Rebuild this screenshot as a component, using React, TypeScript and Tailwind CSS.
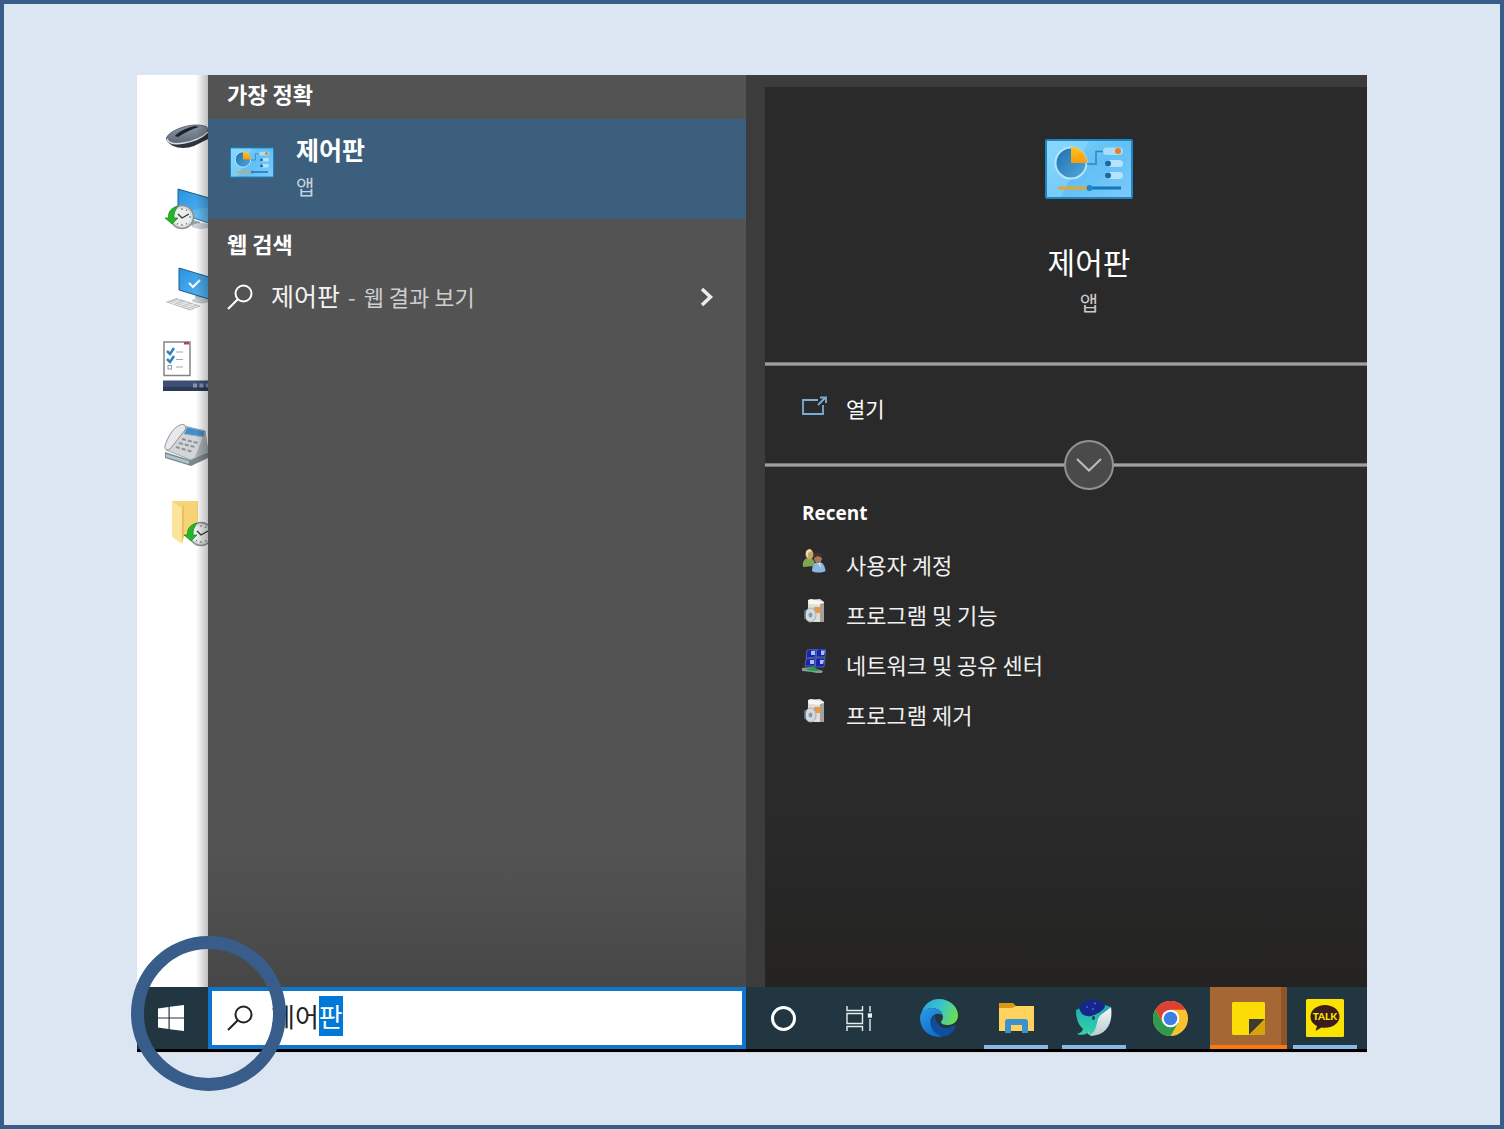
import { useEffect, useRef } from "react";
import type { ReactNode } from "react";

function ControlPanelIcon({ className }: { className: string }) {
  return (
    <svg viewBox="0 0 88 60" className={className} aria-hidden="true">
      <defs>
        <linearGradient id="cp-bg" x1="0" y1="0" x2="1" y2="1">
          <stop offset="0" stopColor="#7fd3fb" />
          <stop offset="0.5" stopColor="#62bff5" />
          <stop offset="1" stopColor="#7ccbfa" />
        </linearGradient>
        <linearGradient id="cp-pie" x1="0" y1="0" x2="1" y2="1">
          <stop offset="0" stopColor="#1c6fae" />
          <stop offset="1" stopColor="#55a9dc" />
        </linearGradient>
        <linearGradient id="cp-slice" x1="0" y1="0" x2="0" y2="1">
          <stop offset="0" stopColor="#ffc31f" />
          <stop offset="1" stopColor="#f79a10" />
        </linearGradient>
      </defs>
      <rect x="1" y="1" width="86" height="58" rx="1" fill="url(#cp-bg)" stroke="#1f83c4" strokeWidth="2" />
      <path d="M2 2H44L16 58H2Z" fill="#9be0ff" opacity="0.4" />
      <circle cx="26" cy="24" r="15.5" fill="url(#cp-pie)" stroke="#b4e6ff" strokeWidth="2" />
      <path d="M26 24V8A16 16 0 0 1 42 24Z" fill="url(#cp-slice)" />
      <path d="M42 25H51V12.500H59" fill="none" stroke="#2a86c0" strokeWidth="1.500" />
      <rect x="58" y="8.500" width="20" height="7.500" rx="3.700" fill="#a9def9" />
      <circle cx="73" cy="12" r="3" fill="#ef7d1a" />
      <rect x="60" y="21" width="18" height="7" rx="3.500" fill="#b4e3fb" />
      <circle cx="63" cy="24.500" r="3" fill="#176ba6" />
      <rect x="60" y="33" width="18" height="7" rx="3.500" fill="#b4e3fb" />
      <circle cx="63" cy="36.500" r="3" fill="#176ba6" />
      <path d="M13 49H42" stroke="#e9a42c" strokeWidth="3" />
      <path d="M46 49H76" stroke="#1476bd" strokeWidth="3" />
      <circle cx="44.500" cy="49" r="3" fill="#1b86d2" />
    </svg>
  );
}

function SearchGlyph({ className }: { className: string }) {
  return (
    <svg viewBox="0 0 26 26" className={className} fill="none" stroke="currentColor" strokeWidth="2" aria-hidden="true">
      <circle cx="16.500" cy="9.500" r="8" />
      <path d="M10.800 15.200L1 25" />
    </svg>
  );
}

function Clock({ x, y }: { x: number; y: number }) {
  return (
    <g transform={`translate(${x} ${y})`}>
      <circle r="11.500" fill="#d9dcdd" stroke="#8b9093" strokeWidth="1.500" />
      <circle r="9" fill="#eceeee" />
      <path d="M0-9V-7M0 7V9M7 0H9M5-7.500L4-6M5 7.500L4 6M-5 7.500L-4 6" stroke="#666" strokeWidth="1" />
      <path d="M-4-3L0 1L7-3" fill="none" stroke="#333" strokeWidth="1.300" />
      <path d="M-4-11C-12-9-14-4-13.500 1H-17L-10 7L-4 1H-8C-8.500-3-7-7-4-11Z" fill="#25b52b" stroke="#13861c" strokeWidth="0.700" />
    </g>
  );
}

function DesktopIcon({ children }: { children: ReactNode }) {
  return (
    <svg width="46" height="78" viewBox="0 0 46 78" className="shrink-0" aria-hidden="true">
      {children}
    </svg>
  );
}

function DesktopStrip() {
  return (
    <div className="relative flex w-[71px] shrink-0 flex-col overflow-hidden bg-white pl-[25px] pt-[21px]">
      <DesktopIcon>
        <defs>
          <linearGradient id="mouse" x1="0" y1="0" x2="0" y2="1">
            <stop offset="0" stopColor="#8c98a6" />
            <stop offset="1" stopColor="#5d6876" />
          </linearGradient>
          <linearGradient id="screen" x1="0" y1="0" x2="1" y2="1">
            <stop offset="0" stopColor="#2a93e0" />
            <stop offset="1" stopColor="#5bb9f5" />
          </linearGradient>
        </defs>
        <path d="M5 44C8 52 22 54 32 50L46 43V34L10 40Z" fill="#30353b" />
        <path d="M4.500 42C6 36 22 29 34 29C42 29 46 31 46 33C46 39 32 45 20 47.500C11 49 4 47 4.500 42Z" fill="url(#mouse)" stroke="#4a525c" strokeWidth="0.800" />
        <path d="M5 43C7 48 14 48.500 22 47C33 45 42 40 46 36" fill="none" stroke="#d9dee3" strokeWidth="1.500" />
        <path d="M13 40C16 36 24 32 33 30L37 31C30 33 22 37 16 41Z" fill="#1c2228" />
      </DesktopIcon>
      <DesktopIcon>
        <path d="M28 45L38 48V51L30 53Z" fill="#9ba3aa" />
        <ellipse cx="39" cy="52" rx="9" ry="3" fill="#cfd4d8" />
        <path d="M16 15L47 24V49L16 39Z" fill="url(#screen)" stroke="#1a5c94" strokeWidth="1" />
        <path d="M16 39L47 49L47 33Z" fill="#8ad0fb" opacity="0.35" />
        <Clock x={20} y={43} />
      </DesktopIcon>
      <DesktopIcon>
        <path d="M33 43L41 45V48H34Z" fill="#aab0b5" />
        <ellipse cx="39" cy="48.500" rx="9" ry="3" fill="#c6ccd0" />
        <path d="M17 16L47 25V47L17 38Z" fill="url(#screen)" stroke="#1a5c94" strokeWidth="1" />
        <path d="M27 31L31 35L38 28" fill="none" stroke="#fff" strokeWidth="2" />
        <path d="M3.500 50L15 46L39 54L28 58.500Z" fill="#b9bec3" />
        <path d="M7 50L30 57M10 49L33 56M13 48L36 55M10 52L18 47M17 54L25 50M24 56L32 52" stroke="#f0f2f3" strokeWidth="0.800" />
      </DesktopIcon>
      <DesktopIcon>
        <rect x="2" y="12" width="26" height="33.500" fill="#fff" stroke="#858585" strokeWidth="1.500" />
        <rect x="22" y="12" width="5" height="2.500" fill="#b9414c" />
        <path d="M5 21L8 24L12 18M5 29L8 32L12 26" fill="none" stroke="#2b83c6" strokeWidth="2.500" />
        <rect x="6" y="35.500" width="3.500" height="3.500" fill="none" stroke="#999" />
        <path d="M14 22H21M14 29.500H21M14 37H21" stroke="#aaa" strokeWidth="1" />
        <rect x="1" y="50.500" width="46" height="10.500" fill="#3d4f72" />
        <rect x="1" y="57" width="46" height="4" fill="#2c3a59" />
        <path d="M31 55.500H35M37.500 55.500H41.500M44 55.500H47" stroke="#8492ae" strokeWidth="4" />
      </DesktopIcon>
      <DesktopIcon>
        <path d="M3 44L28 52L46 44V50L29 58L3 50Z" fill="#7c878c" />
        <path d="M4 46L27 53V56L4 49Z" fill="#a9c7cc" />
        <path d="M4 42L22 18L43 23L46 43L29 52Z" fill="#d2d5d8" stroke="#8f959a" strokeWidth="0.800" />
        <path d="M25 19L43 23L42 29L22 26Z" fill="#3d8fd0" stroke="#a8adb0" strokeWidth="1" />
        <path d="M20 31L36 35M17 35L33 39M14 39L31 44" stroke="#8b9297" strokeWidth="2" strokeDasharray="4 2" />
        <path d="M3 38C2 42 6 43 9 40L23 22C25 18 22 15 18 17C11 20 6 28 3 38Z" fill="#e7e9ea" stroke="#84898e" strokeWidth="0.900" />
        <path d="M33 49L42 26L46 43Z" fill="#8e969b" opacity="0.6" />
      </DesktopIcon>
      <DesktopIcon>
        <rect x="10" y="15" width="26" height="35" fill="#f5d477" />
        <path d="M10 15L20 22V58L10 51Z" fill="#fbe39a" />
        <path d="M20 22V58L22 50V18Z" fill="#e8c15c" />
        <Clock x={39} y={48} />
      </DesktopIcon>
      <div className="absolute inset-y-0 right-0 w-3 bg-linear-to-r from-transparent to-black/25" />
    </div>
  );
}

function UsersIcon() {
  return (
    <svg viewBox="0 0 24 24" className="size-6" aria-hidden="true">
      <path d="M1 18C0 12 3 9 7 9S13 12 13 17Z" fill="#7fa653" />
      <ellipse cx="7.500" cy="5.500" rx="4" ry="5" fill="#c9a368" />
      <path d="M4 5C3 0 9-1 10 2L6 4L6 9Z" fill="#efdca8" />
      <path d="M10 22C10 16 13 13 17 13S23 17 23.500 22C20 24 13 24 10 22Z" fill="#8cb6de" />
      <ellipse cx="16" cy="9" rx="4" ry="5" fill="#a8765a" />
      <path d="M11.500 9C11 3 17 2 20 6V9L16 7Z" fill="#3f342d" />
      <path d="M16 14L18 14L19 19Z" fill="#e8f0f8" />
    </svg>
  );
}

function ProgramsIcon() {
  return (
    <svg viewBox="0 0 24 24" className="size-6" aria-hidden="true">
      <path d="M6 1L18 0L22 3V23H8L6 20Z" fill="#deddd9" />
      <path d="M6 1L9 0L22 3V6L7 5Z" fill="#f7f7f5" />
      <path d="M18 5L22 4V23H18Z" fill="#a5a29c" />
      <rect x="12" y="8" width="6" height="6" fill="#e69a48" />
      <ellipse cx="8.500" cy="16" rx="5.500" ry="7" fill="#d4dbe0" stroke="#9eacb4" />
      <ellipse cx="8.500" cy="16" rx="2" ry="2.500" fill="#8598a5" />
      <path d="M3 11V20" stroke="#5f7482" strokeWidth="1.500" />
    </svg>
  );
}

function NetworkIcon() {
  return (
    <svg viewBox="0 0 24 24" className="size-6" aria-hidden="true">
      <path d="M5 1L14 0V8L4 9ZM15 0H24L23 8H14ZM4 10L13 9V17L3 17ZM14 9H23L22 18H13Z" fill="#1a22b4" stroke="#7088c0" strokeWidth="0.600" />
      <path d="M9 2L13 1.500V6L9 6ZM19 1.500L23 1.500L22 6H19ZM8 11L12 11V15L8 15ZM18 11L22 11L21 15H18Z" fill="#a9bff8" />
      <path d="M0 19L8 18L21 22L19 25L10 23L0 22Z" fill="#8c969b" />
      <path d="M4 20L11 17L17 22L9 22Z" fill="#23a24b" />
    </svg>
  );
}

const recent = [
  { label: "사용자 계정", icon: <UsersIcon /> },
  { label: "프로그램 및 기능", icon: <ProgramsIcon /> },
  { label: "네트워크 및 공유 센터", icon: <NetworkIcon /> },
  { label: "프로그램 제거", icon: <ProgramsIcon /> },
];

function ResultsPanel() {
  return (
    <section className="flex w-[538px] shrink flex-col bg-linear-to-b from-[#525352] from-85% to-[#474747] text-white">
      <h2 className="h-11 pl-[19px] text-[22px] leading-9 font-bold">가장 정확</h2>
      <button type="button" className="flex h-[100px] items-start bg-[#3b5f7c] pl-[22px] text-left">
        <ControlPanelIcon className="mt-7 h-[31px] w-11" />
        <span className="ml-[22px] flex flex-col">
          <span className="mt-3 text-[25px] leading-9 font-bold">제어판</span>
          <span className="mt-1 text-[20px] leading-8 text-[#c5d3df]">앱</span>
        </span>
      </button>
      <h2 className="mt-1.5 pl-[19px] text-[22px] leading-9 font-bold">웹 검색</h2>
      <button type="button" className="mt-2 flex h-14 items-center pl-[19px] pr-8 text-left">
        <SearchGlyph className="size-[26px]" />
        <span className="mb-1 ml-[18px] flex flex-1 items-baseline gap-2 text-[22px] leading-9 text-[#cfcfcf]">
          <span className="text-[25px] text-[#f2f2f2]">제어판</span>
          <span>-</span>
          <span>웹 결과 보기</span>
        </span>
        <svg viewBox="0 0 14 20" className="h-5 w-3.5" fill="none" stroke="#ededed" strokeWidth="3.500" aria-hidden="true">
          <path d="M2 2L10.500 10L2 18" />
        </svg>
      </button>
    </section>
  );
}

function DetailPanel() {
  return (
    <section className="flex min-w-0 flex-1 bg-[#3c3c3c] pl-[19px] pt-3">
      <div className="flex flex-1 flex-col bg-linear-to-b from-[#2a2a2a] from-80% to-[#242322] text-white">
        <div className="flex h-[275px] flex-col items-center pl-[46px] pt-[52px]">
          <ControlPanelIcon className="h-[60px] w-[88px]" />
          <h1 className="mt-10 text-[30px] leading-11">제어판</h1>
          <p className="mt-1.5 text-[20px] leading-7 text-[#cccccc]">앱</p>
        </div>
        <div className="h-1 border-y border-[#777777] bg-[#a0a0a0]" />
        <button type="button" className="flex h-[97px] items-start pl-[37px] pt-[22px] text-left">
          <svg viewBox="0 0 26 20" className="mt-2 h-5 w-[26px]" fill="none" stroke="#76aedb" strokeWidth="1.800" aria-hidden="true">
            <path d="M16 4H1V18H21V9M16 9L23 2M18 1.500H24V7" />
          </svg>
          <span className="ml-[18px] text-[21px] leading-10">열기</span>
        </button>
        <div className="relative flex h-1 justify-center border-y border-[#777777] bg-[#a0a0a0] pl-[46px]">
          <button
            type="button"
            aria-label="펼치기"
            className="absolute -top-6 flex size-[50px] items-center justify-center rounded-full border-2 border-[#929292] bg-[#4a4a4a]"
          >
            <svg viewBox="0 0 26 14" className="h-3.5 w-[26px]" fill="none" stroke="#bdbdbd" strokeWidth="2" aria-hidden="true">
              <path d="M1 1L13 12.500L25 1" />
            </svg>
          </button>
        </div>
        <h2 className="mt-7 pl-[37px] font-['Open_Sans','Noto_Sans_CJK_KR',sans-serif] text-[19px] leading-9 font-bold">Recent</h2>
        <ul className="mt-2 pl-[37px]">
          {recent.map((item) => (
            <li key={item.label}>
              <button type="button" className="flex h-[50px] items-center gap-5 text-left text-[22px] text-[#f0f0f0]">
                <span className="-mt-1.5">{item.icon}</span>
                {item.label}
              </button>
            </li>
          ))}
        </ul>
      </div>
    </section>
  );
}

function TaskButton({ label, open, active, children }: { label: string; open?: boolean; active?: boolean; children: ReactNode }) {
  return (
    <button
      type="button"
      aria-label={label}
      className={active ? "relative flex items-center justify-center bg-[#a56733]" : "relative flex items-center justify-center"}
    >
      {active && <span className="absolute inset-y-0 right-0 w-1.5 bg-[#8d5528]" />}
      {active && <span className="absolute inset-x-0 bottom-0 h-1 bg-[#f97a10]" />}
      {open && <span className="absolute bottom-0 h-1 w-16 bg-[#84b9e8]" />}
      {children}
    </button>
  );
}

function EdgeIcon() {
  return (
    <svg viewBox="0 0 38 38" className="size-[38px]" aria-hidden="true">
      <defs>
        <linearGradient id="edge-top" x1="0" y1="0.300" x2="1" y2="0.600">
          <stop offset="0" stopColor="#2aa5e2" />
          <stop offset="0.500" stopColor="#3cc5cc" />
          <stop offset="1" stopColor="#6be04b" />
        </linearGradient>
        <linearGradient id="edge-left" x1="0" y1="0" x2="0.500" y2="1">
          <stop offset="0" stopColor="#2b9be6" />
          <stop offset="1" stopColor="#0f6fcf" />
        </linearGradient>
      </defs>
      <path d="M1 16C3 6 10 0 19 0C30 0 38 8 38 16C38 22 34 26 28 26C24 26 21 25 21 23C21 22 23 21 23 18C23 13 18 9 12 9C7 9 3 12 1 16Z" fill="url(#edge-top)" />
      <path d="M15 16C10 20 9 31 19 37C27 39 33 34 35 29C36 27 35 26 33 27C25 32 15 27 15 16Z" fill="#0d4f9d" />
      <path d="M0 19C0 13 5 9 12 9C18 9 22 13 23 17C20 14 15 14 12 18C8 25 13 35 22 38C10 39 0 31 0 19Z" fill="url(#edge-left)" />
    </svg>
  );
}

function WhaleIcon() {
  return (
    <svg viewBox="0 0 36 36" className="size-9" aria-hidden="true">
      <defs>
        <linearGradient id="whale-body" x1="0" y1="0" x2="0" y2="1">
          <stop offset="0" stopColor="#1fa7b4" />
          <stop offset="1" stopColor="#35d3a8" />
        </linearGradient>
        <linearGradient id="whale-belly" x1="0" y1="0" x2="0" y2="1">
          <stop offset="0" stopColor="#f3f8f8" />
          <stop offset="1" stopColor="#b9cccf" />
        </linearGradient>
      </defs>
      <path d="M35 7C37 20 33 35 15 36L11 33L20 18Z" fill="url(#whale-belly)" />
      <path d="M0 10C0 19 2 24 7 29C6 32 4 33 1 34C7 36 11 34 12 32C13 33 13 34 14 35C18 33 20 28 21 23C22 17 25 14 29 11C32 9 34 8 35 7L26 4L4 8Z" fill="url(#whale-body)" />
      <path d="M3 7C8-1 20-3 29 5C29 9 26 10 24 12C21 14 18 15 15 16C9 17 4 14 3 7Z" fill="#17268b" />
      <ellipse cx="17.500" cy="18" rx="1.500" ry="2" fill="#10414f" />
      <circle cx="11" cy="7" r="0.700" fill="#8da6ff" />
      <circle cx="19" cy="3.500" r="0.700" fill="#8da6ff" />
      <circle cx="17" cy="9" r="0.700" fill="#8da6ff" />
    </svg>
  );
}

function ChromeIcon() {
  return (
    <svg viewBox="0 0 36 36" className="size-[35px]" aria-hidden="true">
      <circle cx="18" cy="18" r="18" fill="#fbc230" />
      <path d="M2.400 9A18 18 0 0 1 33.600 9H18L10.200 22.500Z" fill="#df3f32" />
      <path d="M2.400 9A18 18 0 0 0 18 36L25.800 22.500H10.200Z" fill="#2e9a4b" />
      <circle cx="18" cy="18" r="9" fill="#fff" />
      <circle cx="18" cy="18" r="7" fill="#3e7de6" />
    </svg>
  );
}

function Taskbar() {
  const input = useRef<HTMLInputElement>(null);

  useEffect(() => {
    input.current?.focus();
    input.current?.setSelectionRange(2, 3);
  }, []);

  return (
    <footer className="border-b border-[#d8d8d8]">
      <div className="relative flex h-[65px] border-b-[3px] border-black bg-[#213640]">
        <button type="button" aria-label="시작" className="flex w-[71px] shrink-0 items-center justify-center pr-1">
          <svg viewBox="0 0 26 26" className="size-[26px]" fill="#fff" aria-hidden="true">
            <path d="M0 3.500L10.500 2V12.400H0ZM11.700 1.800L26 0V12.400H11.700ZM0 13.600H10.500V24L0 22.500ZM11.700 13.600H26V26L11.700 24.200Z" />
          </svg>
        </button>
        <label className="flex w-[538px] shrink items-center border-4 border-[#0f76cb] bg-white pl-[15px] text-[#222222]">
          <SearchGlyph className="size-[26px] shrink-0" />
          <input
            ref={input}
            type="text"
            aria-label="검색"
            defaultValue="제어판"
            className="mb-1 ml-[18px] h-10 min-w-0 flex-1 text-[26px] leading-10 outline-none selection:bg-[#0078d7] selection:text-white"
          />
        </label>
        <nav className="grid min-w-0 flex-1 grid-cols-8 pr-[3px]">
          <TaskButton label="Cortana">
            <span className="mr-0.5 size-[25px] rounded-full border-[3px] border-white" />
          </TaskButton>
          <TaskButton label="작업 보기">
            <svg viewBox="0 0 26 25" className="mr-1.5 h-[25px] w-[26px]" fill="none" stroke="#e8eced" strokeWidth="1.400" aria-hidden="true">
              <path d="M1 0V4.500H16.500V0M1 7.500H16.500V17.500H1ZM1 25V20.500H16.500V25M24 0V6M24 13V25" />
              <rect x="22.500" y="8" width="3" height="3" fill="#fff" />
            </svg>
          </TaskButton>
          <TaskButton label="Microsoft Edge">
            <EdgeIcon />
          </TaskButton>
          <TaskButton label="파일 탐색기" open>
            <svg viewBox="0 0 35 30" className="h-[30px] w-[35px]" aria-hidden="true">
              <path d="M0 0H14L17 3H34V9H0Z" fill="#d99a13" />
              <path d="M0 5H13L17 3H35V28H0Z" fill="#fdd25d" />
              <path d="M6 30V19Q6 16 9 16H26Q29 16 29 19V30H23V22H12V30Z" fill="#3f90cf" />
            </svg>
          </TaskButton>
          <TaskButton label="Whale" open>
            <WhaleIcon />
          </TaskButton>
          <TaskButton label="Chrome">
            <ChromeIcon />
          </TaskButton>
          <TaskButton label="스티커 메모" active>
            <svg viewBox="0 0 33 33" className="relative size-[33px]" aria-hidden="true">
              <path d="M1 0H32L33 1V33H1L0 32V1Z" fill="#fcdc06" />
              <path d="M17 33V17H33Z" fill="#3d3b32" />
              <path d="M17 33L33 17V33Z" fill="#d3a50b" />
            </svg>
          </TaskButton>
          <TaskButton label="카카오톡" open>
            <svg viewBox="0 0 38 38" className="size-[38px]" aria-hidden="true">
              <rect width="38" height="38" rx="1.500" fill="#fbe300" />
              <path d="M19 6C11 6 4.500 11 4.500 17.500C4.500 22 7 25 11 27L9.500 32L15.500 28.500C25 30 33.500 25 33.500 17.500C33.500 11 27 6 19 6Z" fill="#3b1d1c" />
              <text x="19" y="21" textAnchor="middle" fontFamily="Lato, sans-serif" fontWeight="900" fontSize="10" fill="#fbe300">
                TALK
              </text>
            </svg>
          </TaskButton>
        </nav>
        <div className="pointer-events-none absolute -left-1.5 -top-[51px] size-[155px] rounded-full border-[13px] border-[#385d8a]" />
      </div>
    </footer>
  );
}

export default function App() {
  return (
    <main className="flex min-h-screen flex-col border-4 border-[#385d8a] bg-[#dce6f2] px-[133px] pt-[71px] pb-[72px] font-['Noto_Sans_CJK_KR',sans-serif]">
      <div className="flex flex-1">
        <DesktopStrip />
        <ResultsPanel />
        <DetailPanel />
      </div>
      <Taskbar />
    </main>
  );
}
